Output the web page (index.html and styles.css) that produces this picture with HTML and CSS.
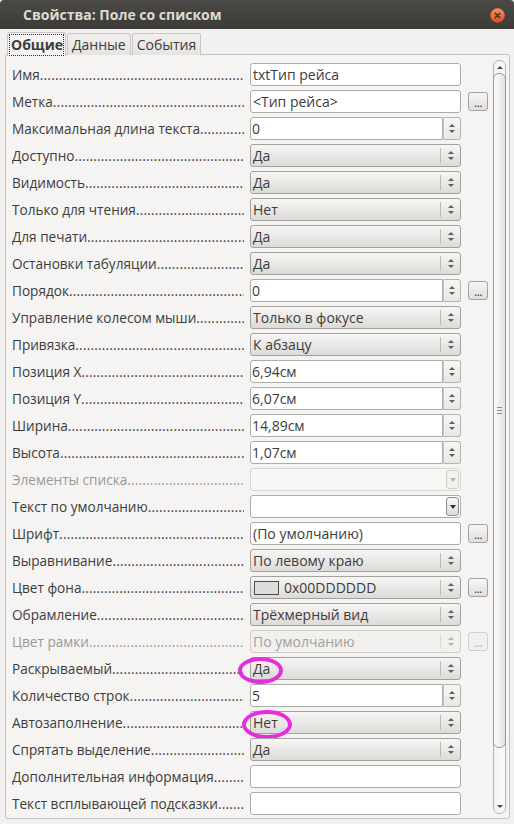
FILE: index.html
```html
<!DOCTYPE html>
<html lang="ru">
<head>
<meta charset="utf-8">
<title>Свойства: Поле со списком</title>
<link rel="stylesheet" href="styles.css">
</head>
<body>
<div class="window">
  <div class="titlebar">
    <span class="title">Свойства: Поле со списком</span>
    <span class="close"><svg width="15" height="15" viewBox="0 0 15 15"><circle cx="7.5" cy="7.5" r="7.2" fill="url(#cg)"/><defs><linearGradient id="cg" x1="0" y1="0" x2="0" y2="1"><stop offset="0" stop-color="#f7905f"/><stop offset="1" stop-color="#df4f1c"/></linearGradient></defs><path d="M5.2 5.2 L9.8 9.8 M9.8 5.2 L5.2 9.8" stroke="#3a2a22" stroke-width="1.3" stroke-linecap="round"/></svg></span>
  </div>
  <div class="body">
    <div class="tabs">
      <div class="tab active"><span class="focus">Общие</span></div>
      <div class="tab">Данные</div>
      <div class="tab">События</div>
    </div>
    <div class="panel">
      <div class="rows">
        <div class="row"><span class="label">Имя</span><div class="ctl input">txtТип рейса</div></div>
        <div class="row"><span class="label">Метка</span><div class="ctl input">&lt;Тип рейса&gt;</div><span class="btn">...</span></div>
        <div class="row"><span class="label">Максимальная длина текста</span><div class="ctl spin"><span class="field">0</span><span class="spinbox"><i class="up"></i><i class="down"></i></span></div></div>
        <div class="row"><span class="label">Доступно</span><div class="ctl drop"><span class="val">Да</span><span class="arrows"><i class="up"></i><i class="down"></i></span></div></div>
        <div class="row"><span class="label">Видимость</span><div class="ctl drop"><span class="val">Да</span><span class="arrows"><i class="up"></i><i class="down"></i></span></div></div>
        <div class="row"><span class="label">Только для чтения</span><div class="ctl drop"><span class="val">Нет</span><span class="arrows"><i class="up"></i><i class="down"></i></span></div></div>
        <div class="row"><span class="label">Для печати</span><div class="ctl drop"><span class="val">Да</span><span class="arrows"><i class="up"></i><i class="down"></i></span></div></div>
        <div class="row"><span class="label">Остановки табуляции</span><div class="ctl drop"><span class="val">Да</span><span class="arrows"><i class="up"></i><i class="down"></i></span></div></div>
        <div class="row"><span class="label">Порядок</span><div class="ctl spin"><span class="field">0</span><span class="spinbox"><i class="up"></i><i class="down"></i></span></div><span class="btn">...</span></div>
        <div class="row"><span class="label">Управление колесом мыши</span><div class="ctl drop"><span class="val">Только в фокусе</span><span class="arrows"><i class="up"></i><i class="down"></i></span></div></div>
        <div class="row"><span class="label">Привязка</span><div class="ctl drop"><span class="val">К абзацу</span><span class="arrows"><i class="up"></i><i class="down"></i></span></div></div>
        <div class="row"><span class="label">Позиция X</span><div class="ctl spin"><span class="field">6,94см</span><span class="spinbox"><i class="up"></i><i class="down"></i></span></div></div>
        <div class="row"><span class="label">Позиция Y</span><div class="ctl spin"><span class="field">6,07см</span><span class="spinbox"><i class="up"></i><i class="down"></i></span></div></div>
        <div class="row"><span class="label">Ширина</span><div class="ctl spin"><span class="field">14,89см</span><span class="spinbox"><i class="up"></i><i class="down"></i></span></div></div>
        <div class="row"><span class="label">Высота</span><div class="ctl spin"><span class="field">1,07см</span><span class="spinbox"><i class="up"></i><i class="down"></i></span></div></div>
        <div class="row"><span class="label disabled">Элементы списка</span><div class="ctl combo off"><span class="field"></span><span class="dbtn"><i class="down"></i></span></div></div>
        <div class="row"><span class="label">Текст по умолчанию</span><div class="ctl combo"><span class="field"></span><span class="dbtn"><i class="down"></i></span></div></div>
        <div class="row"><span class="label">Шрифт</span><div class="ctl input">(По умолчанию)</div><span class="btn">...</span></div>
        <div class="row"><span class="label">Выравнивание</span><div class="ctl drop"><span class="val">По левому краю</span><span class="arrows"><i class="up"></i><i class="down"></i></span></div></div>
        <div class="row"><span class="label">Цвет фона</span><div class="ctl drop"><span class="val"><span class="swatch"></span>0x00DDDDDD</span><span class="arrows"><i class="up"></i><i class="down"></i></span></div><span class="btn">...</span></div>
        <div class="row"><span class="label">Обрамление</span><div class="ctl drop"><span class="val">Трёхмерный вид</span><span class="arrows"><i class="up"></i><i class="down"></i></span></div></div>
        <div class="row"><span class="label disabled">Цвет рамки</span><div class="ctl drop off"><span class="val">По умолчанию</span><span class="arrows"><i class="up"></i><i class="down"></i></span></div><span class="btn off">...</span></div>
        <div class="row"><span class="label">Раскрываемый</span><div class="ctl drop"><span class="val">Да</span><span class="arrows"><i class="up"></i><i class="down"></i></span><span class="mark m1"></span></div></div>
        <div class="row"><span class="label">Количество строк</span><div class="ctl spin"><span class="field">5</span><span class="spinbox"><i class="up"></i><i class="down"></i></span></div></div>
        <div class="row"><span class="label">Автозаполнение</span><div class="ctl drop"><span class="val">Нет</span><span class="arrows"><i class="up"></i><i class="down"></i></span><span class="mark m2"></span></div></div>
        <div class="row"><span class="label">Спрятать выделение</span><div class="ctl drop"><span class="val">Да</span><span class="arrows"><i class="up"></i><i class="down"></i></span></div></div>
        <div class="row"><span class="label">Дополнительная информация</span><div class="ctl input"></div></div>
        <div class="row"><span class="label">Текст всплывающей подсказки</span><div class="ctl input"></div></div>
      </div>
      <div class="scrollbar">
        <span class="sarrow up"></span>
        <div class="slider"><span class="grip"></span></div>
        <span class="sarrow down"></span>
      </div>
    </div>
  </div>
</div>
</body>
</html>
```

FILE: styles.css
```css
* { box-sizing: border-box; }
html, body { margin: 0; padding: 0; }
body {
  width: 514px;
  height: 824px;
  overflow: hidden;
  background: #f2f1f0;
  font-family: "Open Sans", "DejaVu Sans", sans-serif;
  font-size: 14px;
  color: #3c3c3c;
}
.window { width: 514px; height: 824px; display: flex; flex-direction: column; }
.titlebar {
  height: 29px;
  flex: none;
  display: flex;
  align-items: center;
  justify-content: space-between;
  padding: 0 9px 0 23px;
  background: linear-gradient(#4b4945, #3c3b37);
  border-radius: 4px 4px 0 0;
}
.title { color: #dfdbd2; font-weight: bold; font-size: 14px; }
.close { width: 15px; height: 15px; display: flex; margin-top: 2px; }
.body { flex: 1; display: flex; flex-direction: column; padding: 3px 4px 5px 5px; min-height: 0; }
.tabs { display: flex; height: 23px; flex: none; padding-left: 2px; gap: 1px; position: relative; z-index: 1; }
.tab {
  height: 22px;
  margin-top: 1px;
  padding: 0 4px;
  display: flex;
  align-items: center;
  font-size: 14px;
  border: 1px solid #c9c7c3;
  border-bottom: none;
  border-radius: 3px 3px 0 0;
  background: linear-gradient(#f0efee, #e6e4e1);
}
.tab.active {
  height: 24px;
  margin-top: 0;
  padding: 0 1px;
  background: #f5f4f3;
  font-weight: bold;
}
.focus { border: 1px dotted #333; padding: 0 0 1px 1px; line-height: 19px; }
.panel {
  flex: 1;
  min-height: 0;
  display: flex;
  border: 1px solid #c4c2be;
  border-radius: 3px;
  background: #f5f4f3;
  overflow: hidden;
  margin-top: -1px;
}
.rows { flex: none; width: 486px; padding: 6px 0 0 6px; }
.row {
  height: 27px;
  display: flex;
  align-items: center;
  white-space: nowrap;
}
.label {
  width: 232px;
  margin-right: 6px;
  display: flex;
  overflow: hidden;
  flex: none;
  font-size: 13.6px;
}
.label::after {
  content: "..................................................................................................................";
  flex: 1;
  min-width: 0;
  overflow: hidden;
  letter-spacing: 0.2px;
}
.label.disabled { color: #9a9896; }
.ctl {
  width: 211px;
  height: 23px;
  flex: none;
  position: relative;
  display: flex;
  align-items: center;
}
.input {
  background: #fff;
  border: 1px solid #aeaca8;
  border-radius: 3px;
  padding-left: 2px;
}
.spin .field {
  flex: 1;
  height: 23px;
  background: #fff;
  border: 1px solid #aeaca8;
  border-radius: 3px 0 0 3px;
  padding-left: 1px;
  display: flex;
  align-items: center;
}
.spinbox {
  width: 18px;
  height: 23px;
  border: 1px solid #b6b4b0;
  border-left: 1px solid #c9c7c3;
  border-radius: 0 3px 3px 0;
  background: linear-gradient(#f7f6f5, #e9e7e4);
  display: flex;
  flex-direction: column;
  align-items: center;
  justify-content: center;
  gap: 3px;
}
i.up, i.down { display: block; width: 0; height: 0; border-left: 3px solid transparent; border-right: 3px solid transparent; }
i.up { border-bottom: 3px solid #5f5f5f; }
i.down { border-top: 3px solid #5f5f5f; }
.drop {
  border: 1px solid #a3a19d;
  border-radius: 3px;
  background: linear-gradient(#f7f6f5, #dddbd8);
  justify-content: space-between;
}
.drop .val { padding-left: 2px; display: flex; align-items: center; }
.arrows {
  width: 20px;
  height: 15px;
  border-left: 1px solid #bcbab6;
  display: flex;
  flex-direction: column;
  align-items: center;
  justify-content: center;
  gap: 3px;
  margin-right: 0;
}
.drop.off { background: #f1f0ef; border-color: #cfcdc9; color: #a2a09d; }
.drop.off .arrows { border-left-color: #dcdad7; }
.drop.off i.up { border-bottom-color: #b8b6b3; }
.drop.off i.down { border-top-color: #b8b6b3; }
.swatch {
  width: 25px;
  height: 14px;
  background: #dddddd;
  border: 1px solid #4c4c4c;
  margin: 0 5px 0 1px;
}
.combo { background: #fff; border: 1px solid #aeaca8; border-radius: 3px; justify-content: space-between; }
.combo .field { flex: 1; }
.dbtn {
  width: 13px;
  height: 19px;
  margin-right: 1px;
  border: 1px solid #8f8d89;
  border-radius: 3px;
  background: linear-gradient(#f7f6f5, #dddbd8);
  display: flex;
  align-items: center;
  justify-content: center;
}
.dbtn i.down { border-left-width: 3px; border-right-width: 3px; border-top: 4px solid #2e2e2e; }
.combo.off { background: #f7f7f6; border-color: #d7d5d2; }
.combo.off .dbtn { border-color: #d0cecb; background: #f3f2f1; }
.combo.off .dbtn i.down { border-top-color: #b5b3b0; }
.btn {
  width: 20px;
  height: 19px;
  margin-left: 7px;
  flex: none;
  border: 1px solid #a3a19d;
  border-radius: 3px;
  background: linear-gradient(#f7f6f5, #e1dfdc);
  display: flex;
  align-items: center;
  justify-content: center;
  font-size: 12px;
  line-height: 1;
  padding-top: 2px;
  letter-spacing: -0.5px;
}
.btn.off { color: #b0aeab; border-color: #d2d0cd; background: #f1f0ef; }
.mark {
  position: absolute;
  border: 4px solid #e52ddf;
  border-radius: 50%;
}
.m1 { left: -13px; top: -1px; width: 45px; height: 27px; }
.m2 { left: -9px; top: -2px; width: 50px; height: 29px; }
.scrollbar {
  width: 13px;
  margin: 5px 0 4px 1px;
  border: 1px solid #b5b3af;
  border-radius: 6px;
  background: linear-gradient(90deg, #f3f2f1, #fbfbfa);
  display: flex;
  flex-direction: column;
  align-items: center;
}
.sarrow { width: 0; height: 0; border-left: 3px solid transparent; border-right: 3px solid transparent; flex: none; }
.sarrow.up { border-bottom: 3px solid #4a4a4a; margin: 5px 0 4px; }
.sarrow.down { border-top: 3px solid #4a4a4a; margin: auto 0 5px; }
.slider {
  width: 13px;
  height: 675px;
  flex: none;
  border: 1px solid #9c9a96;
  border-radius: 6px;
  background: linear-gradient(90deg, #fdfdfd, #e3e1de);
  display: flex;
  align-items: center;
  justify-content: center;
}
.grip {
  width: 5px;
  height: 7px;
  background: repeating-linear-gradient(#8c8a87 0 1px, transparent 1px 3px);
}
```
